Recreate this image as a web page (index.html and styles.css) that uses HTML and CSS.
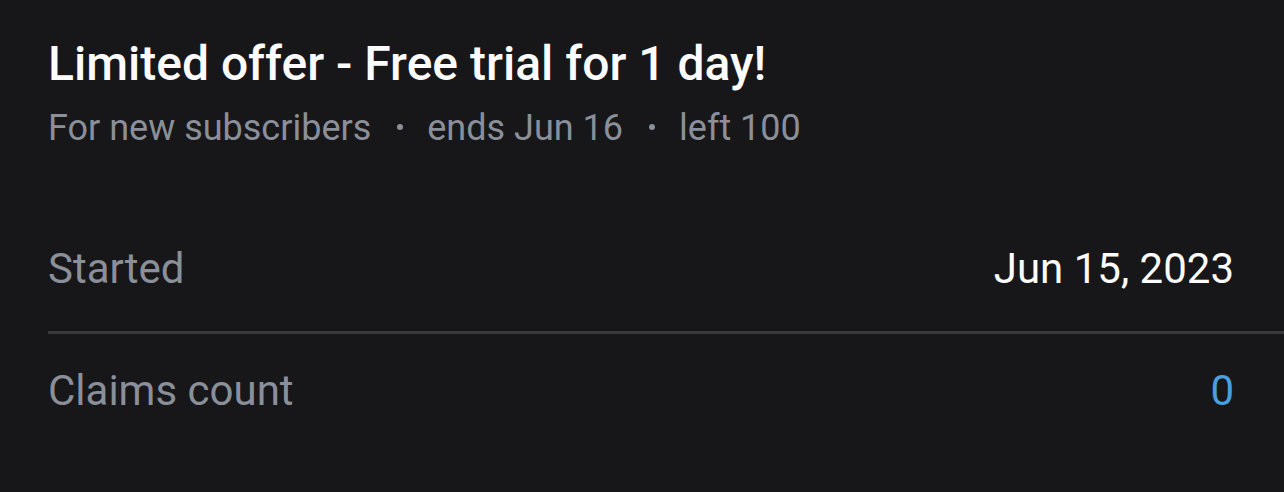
FILE: index.html
```html
<!DOCTYPE html>
<html lang="en">
<head>
  <meta charset="UTF-8"/>
  <title>Limited offer</title>
  <link rel="stylesheet" href="styles.css">
</head>
<body>
  <div class="offer">
    <h1 class="offer-title">Limited offer - Free trial for 1 day!</h1>
    <div class="offer-meta">
      <span>For new subscribers</span>
      <span class="dot"></span>
      <span>ends Jun 16</span>
      <span class="dot"></span>
      <span>left 100</span>
    </div>
  </div>
  <div class="rows">
    <div class="row">
      <span class="row-label">Started</span>
      <span class="row-value">Jun 15, 2023</span>
    </div>
    <div class="row">
      <span class="row-label">Claims count</span>
      <span class="row-value link">0</span>
    </div>
  </div>
</body>
</html>
```

FILE: styles.css
```css
body {
  background:#171719;
  color:#fff;
  font-family:Roboto,'Liberation Sans',Arial,sans-serif;
  margin:0;
  padding:0 0 0 48px;
}
.offer {
  padding:36px 48px 0 0;
}
.offer-title {
  font-size:48px;
  font-weight:500;
  margin:0;
  line-height:56px;
  color:#fbfbfc;
}
.offer-meta {
  display:flex;
  align-items:center;
  color:#8a8f99;
  font-size:36px;
  line-height:44px;
  margin-top:14px;
}
.dot {
  width:6px;
  height:6px;
  border-radius:50%;
  background:#8a8f99;
  margin:-3px 24px 0 26px;
}
.rows {
  margin-top:57px;
}
.row {
  display:flex;
  justify-content:space-between;
  align-items:center;
  padding:37px 50px 37px 0;
  font-size:42px;
  line-height:50px;
}
.row + .row {
  border-top:3px solid #39393d;
  padding-top:32px;
}
.row-label {
  color:#8a8f99;
}
.row-value {
  color:#fbfbfc;
}
.link {
  color:#4a9fe0;
}
```
